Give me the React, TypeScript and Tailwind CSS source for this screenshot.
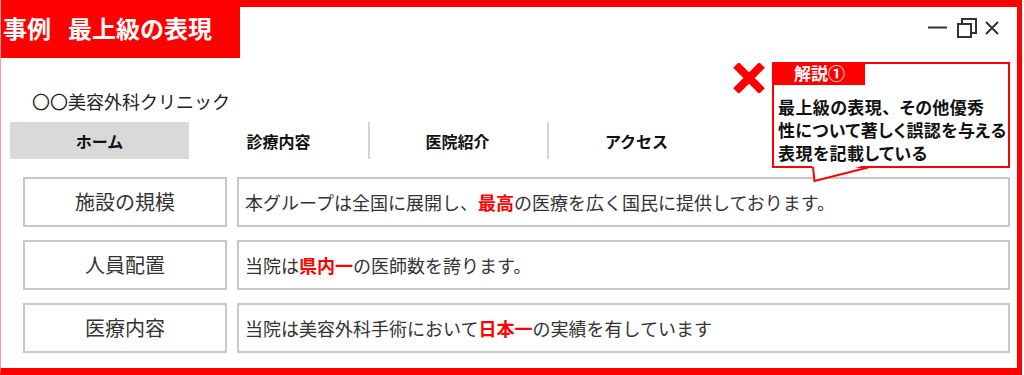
export default function App() {
  const rows = [
    {
      label: "施設の規模",
      value: (
        <>
          本グループは全国に展開し、<span className="text-[#ff0000] font-bold">最高</span>の医療を広く国民に提供しております。
        </>
      ),
    },
    {
      label: "人員配置",
      value: (
        <>
          当院は<span className="text-[#ff0000] font-bold">県内一</span>の医師数を誇ります。
        </>
      ),
    },
    {
      label: "医療内容",
      value: (
        <>
          当院は美容外科手術において<span className="text-[#ff0000] font-bold">日本一</span>の実績を有しています
        </>
      ),
    },
  ];
  const nav = ["ホーム", "診療内容", "医院紹介", "アクセス"];
  return (
    <div className="relative w-[1024px] h-[375px] bg-white font-['Noto_Sans_CJK_JP',sans-serif] overflow-hidden">
      <div className="w-[1022px] h-[375px] border-l border-l-[#ff9a9a] border-r-[5px] border-r-[#ff0000] border-b-[7px] border-b-[#ff0000] flex flex-col">
        <div className="flex h-[58px]">
          <div className="w-[239px] bg-[#ff0000] text-white font-bold text-[24px] leading-none flex items-center pl-[2px] pb-[2px]">
            <span>事例</span>
            <span className="ml-[17px]">最上級の表現</span>
          </div>
          <div className="flex-1 border-t-[7px] border-t-[#ff0000] flex justify-end items-start pt-[11px] pr-[18px] gap-[8px]">
            <svg width="20" height="20" viewBox="0 0 20 20" className="text-[#333]">
              <line x1="0" y1="9.5" x2="19" y2="9.5" stroke="currentColor" strokeWidth="2" />
            </svg>
            <svg width="20" height="20" viewBox="0 0 20 20" className="text-[#333] ml-[1px]">
              <rect x="1" y="6" width="13" height="13" fill="none" stroke="currentColor" strokeWidth="2" />
              <path d="M5 6 V1 H19 V15 H14" fill="none" stroke="currentColor" strokeWidth="2" />
            </svg>
            <svg width="14" height="20" viewBox="0 0 14 20" className="text-[#333]">
              <path d="M1 4 L13 16 M13 4 L1 16" fill="none" stroke="currentColor" strokeWidth="2" />
            </svg>
          </div>
        </div>

        <div className="pl-[31px] mt-[30px] text-[18px] leading-[26px] text-[#222]">〇〇美容外科クリニック</div>

        <div className="ml-[9px] mt-[8px] flex h-[37px]">
          {nav.map((n, i) => (
            <div
              key={n}
              className={
                i === 0
                  ? "w-[179px] bg-[#d9d9d9] flex items-center justify-center font-bold text-[16px] text-[#111]"
                  : i === 1
                  ? "w-[179px] flex items-center justify-center font-bold text-[16px] text-[#111]"
                  : "w-[179px] border-l-2 border-l-[#d4d4d4] flex items-center justify-center font-bold text-[16px] text-[#111] pr-[2px]"
              }
            >
              {n}
            </div>
          ))}
        </div>

        <div className="ml-[22px] mt-[18px] flex flex-col gap-[13px]">
          {rows.map((r) => (
            <div key={r.label} className="flex gap-[10px] h-[50px]">
              <div className="w-[204px] border-2 border-[#c8c8c8] flex items-center justify-center text-[20px] text-[#333]">
                {r.label}
              </div>
              <div className="w-[773px] border-2 border-[#c8c8c8] flex items-center pl-[6px] text-[18px] text-[#333]">
                <span>{r.value}</span>
              </div>
            </div>
          ))}
        </div>
      </div>

      {/* red X mark */}
      <svg className="absolute left-[733px] top-[63px]" width="32" height="30" viewBox="0 0 32 30">
        <path d="M3 2 L29 28 M29 2 L3 28" stroke="#ff0000" strokeWidth="8" fill="none" />
      </svg>

      {/* callout */}
      <div className="absolute left-[772px] top-[62px] w-[238px] h-[122px]">
        <div className="w-[238px] h-[106px] border-2 border-[#ff0000] bg-white">
          <div className="h-[23px] w-[93px] bg-[#ff0000] text-white font-bold text-[17px] leading-[21px] text-center -mt-[2px] -ml-[2px] pl-[2px]">
            解説①
          </div>
          <div className="pl-[4px] mt-[10px] text-[17px] leading-[23px] font-bold text-[#111] [font-feature-settings:'palt'] tracking-[0.4px] whitespace-nowrap">
            最上級の表現<span className="[font-feature-settings:normal]">、</span>その他優秀
            <br />
            性について著しく誤認を与える
            <br />
            表現を記載している
          </div>
        </div>
        <svg className="absolute left-[38px] top-[102px]" width="62" height="20" viewBox="0 0 62 20">
          <polygon points="2,0 4.5,17 58,0" fill="white" />
          <polyline points="3,3 4.5,17 58,3.5" fill="none" stroke="#ff0000" strokeWidth="2" />
        </svg>
      </div>
    </div>
  );
}
